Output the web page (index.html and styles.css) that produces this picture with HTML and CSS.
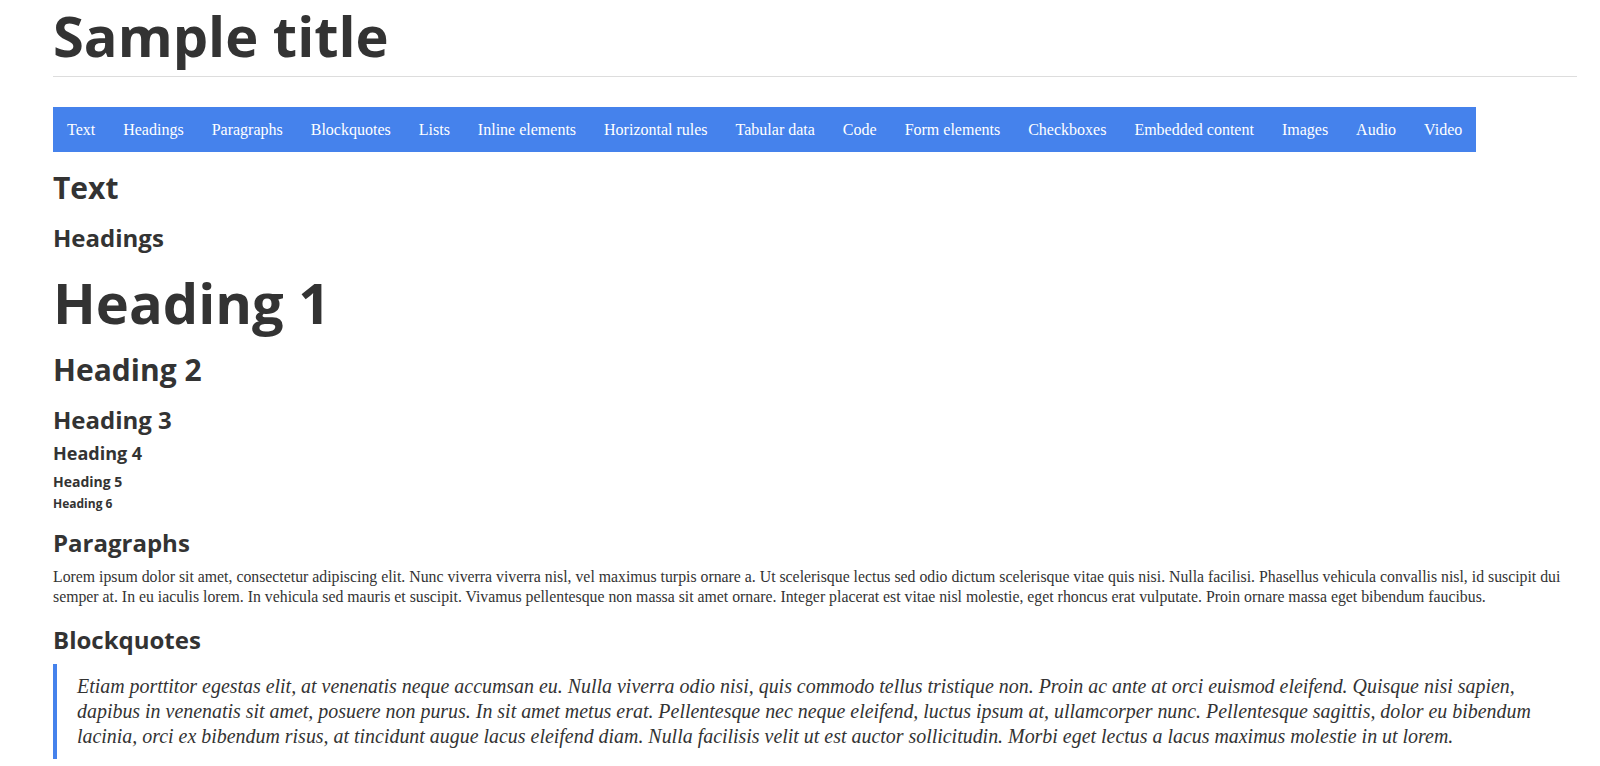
FILE: index.html
```html
<!DOCTYPE html>
<html lang="en">
<head>
<meta charset="utf-8">
<title>Sample title</title>
<link rel="stylesheet" href="styles.css">
</head>
<body>
<div class="page">
  <header class="page-header">
    <h1 class="site-title">Sample title</h1>
  </header>
  <nav class="toc">
    <a class="toc-link" href="#text">Text</a>
    <a class="toc-link" href="#headings">Headings</a>
    <a class="toc-link" href="#paragraphs">Paragraphs</a>
    <a class="toc-link" href="#blockquotes">Blockquotes</a>
    <a class="toc-link" href="#lists">Lists</a>
    <a class="toc-link" href="#inline">Inline elements</a>
    <a class="toc-link" href="#hr">Horizontal rules</a>
    <a class="toc-link" href="#tables">Tabular data</a>
    <a class="toc-link" href="#code">Code</a>
    <a class="toc-link" href="#forms">Form elements</a>
    <a class="toc-link" href="#checkboxes">Checkboxes</a>
    <a class="toc-link" href="#embedded">Embedded content</a>
    <a class="toc-link" href="#images">Images</a>
    <a class="toc-link" href="#audio">Audio</a>
    <a class="toc-link" href="#video">Video</a>
  </nav>
  <main class="content">
    <h2 class="section-title" id="text">Text</h2>
    <h3 class="sub-title" id="headings">Headings</h3>
    <h1 class="h-1">Heading 1</h1>
    <h2 class="h-2">Heading 2</h2>
    <h3 class="h-3">Heading 3</h3>
    <h4 class="h-4">Heading 4</h4>
    <h5 class="h-5">Heading 5</h5>
    <h6 class="h-6">Heading 6</h6>
    <h3 class="sub-title sub-title--para" id="paragraphs">Paragraphs</h3>
    <p class="para">Lorem ipsum dolor sit amet, consectetur adipiscing elit. Nunc viverra viverra nisl, vel maximus turpis ornare a. Ut scelerisque lectus sed odio dictum scelerisque vitae quis nisi. Nulla facilisi. Phasellus vehicula convallis nisl, id suscipit dui semper at. In eu iaculis lorem. In vehicula sed mauris et suscipit. Vivamus pellentesque non massa sit amet ornare. Integer placerat est vitae nisl molestie, eget rhoncus erat vulputate. Proin ornare massa eget bibendum faucibus.</p>
    <h3 class="sub-title sub-title--bq" id="blockquotes">Blockquotes</h3>
    <blockquote class="quote">
      <p class="quote-text">Etiam porttitor egestas elit, at venenatis neque accumsan eu. Nulla viverra odio nisi, quis commodo tellus tristique non. Proin ac ante at orci euismod eleifend. Quisque nisi sapien, dapibus in venenatis sit amet, posuere non purus. In sit amet metus erat. Pellentesque nec neque eleifend, luctus ipsum at, ullamcorper nunc. Pellentesque sagittis, dolor eu bibendum lacinia, orci ex bibendum risus, at tincidunt augue lacus eleifend diam. Nulla facilisis velit ut est auctor sollicitudin. Morbi eget lectus a lacus maximus molestie in ut lorem.</p>
    </blockquote>
  </main>
</div>
</body>
</html>
```
FILE: styles.css
```css
html, body {
  margin: 0;
  padding: 0;
  background: #fff;
}

body {
  font-family: "Liberation Serif", "Times New Roman", serif;
  font-size: 15.8px;
  line-height: 20px;
  color: #333;
}

.page {
  padding: 0 23px 0 53px;
}

h1, h2, h3, h4, h5, h6 {
  font-family: "Open Sans", "Liberation Sans", sans-serif;
  font-weight: 700;
  color: #333;
  margin: 0;
}

.page-header {
  margin-top: 4px;
  padding-bottom: 10px;
  border-bottom: 1px solid #ddd;
}

.site-title {
  font-size: 56px;
  line-height: 62px;
}

.toc {
  display: flex;
  width: fit-content;
  margin-top: 30px;
  background: #4582ec;
}

.toc-link {
  display: block;
  padding: 12.5px 14px;
  font-size: 16px;
  line-height: 20px;
  color: #fff;
  text-decoration: none;
  white-space: nowrap;
}

.section-title {
  margin-top: 19px;
  font-size: 30px;
  line-height: 34px;
}

.sub-title {
  margin-top: 20px;
  font-size: 24px;
  line-height: 26px;
}

.sub-title--para {
  margin-top: 19px;
}

.h-1 {
  margin-top: 20px;
  font-size: 56px;
  line-height: 62px;
}

.h-2 {
  margin-top: 20px;
  font-size: 30px;
  line-height: 34px;
}

.h-3 {
  margin-top: 20px;
  font-size: 24px;
  line-height: 26px;
}

.h-4 {
  margin-top: 10px;
  font-size: 18px;
  line-height: 20px;
}

.h-5 {
  margin-top: 11px;
  font-size: 14px;
  line-height: 16px;
}

.h-6 {
  margin-top: 7px;
  font-size: 12px;
  line-height: 14px;
}

.para {
  margin: 11px 0 0;
}

.quote {
  margin: 11px 0 20px;
  padding: 10px 0 10px 20px;
  border-left: 4px solid #4582ec;
}

.quote-text {
  margin: 0;
  font-style: italic;
  font-size: 19.93px;
  line-height: 25px;
}
```
